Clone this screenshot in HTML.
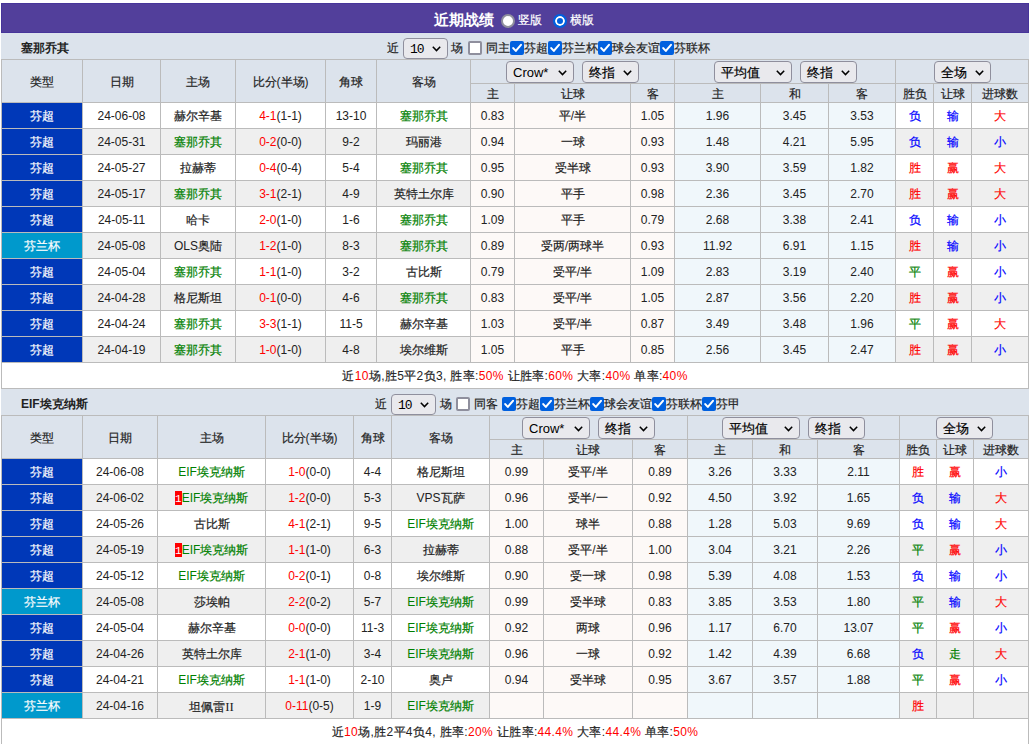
<!DOCTYPE html><html><head><meta charset="utf-8"><style>
html,body{margin:0;padding:0;background:#fff;width:1031px;height:744px;overflow:hidden;position:relative;font-family:"Liberation Sans", sans-serif;}
div{position:absolute;box-sizing:border-box;}
.t{white-space:nowrap;overflow:visible;}
.c{-webkit-text-stroke:0.2px currentColor;}
.sel{background:#e9e9ed;border:1px solid #8f8f9d;border-radius:4px;}
.sel .sl{position:absolute;left:6px;top:-1px;color:#000;white-space:nowrap;}
.chev{position:absolute;}
.cb{width:14px;height:14px;border:2px solid #8f8f9d;border-radius:2px;background:#fff;}
.cb.on{border:none;background:#0060df;}
.cb svg{position:absolute;left:0;top:0;}
.rad{width:14px;height:14px;border-radius:50%;border:2px solid #8f8f9d;background:#fff;}
.rad.on{border:2px solid #0060df;background:#0060df;box-shadow:inset 0 0 0 2px #fff;}
.badge{display:inline-block;background:#f00;color:#fff;width:7px;height:14px;line-height:16px;font-size:11px;text-align:center;vertical-align:-3px;overflow:hidden;font-family:Liberation Mono,monospace;letter-spacing:-0.5px;}
</style></head><body>
<div style="left:1px;top:3px;width:1028px;height:30px;background:#523f9b;border:1px solid #47359a;"></div>
<div class="t" style="left:434px;top:5px;width:62px;height:30px;line-height:30px;color:#fff;font-size:15px;text-align:left;font-weight:bold;--nostroke:1;">近期战绩</div>
<div class="rad" style="left:501px;top:14px;"></div>
<div class="t" style="left:518px;top:5px;width:30px;height:30px;line-height:30px;color:#fff;font-size:12px;text-align:left;"><span class="c">竖版</span></div>
<div class="rad on" style="left:553px;top:14px;"></div>
<div class="t" style="left:570px;top:5px;width:30px;height:30px;line-height:30px;color:#fff;font-size:12px;text-align:left;"><span class="c">横版</span></div>
<div style="left:1px;top:33px;width:1028px;height:26px;background:#dce3ec;"></div>
<div class="t" style="left:21px;top:34px;width:100px;height:26px;line-height:26px;color:#222;font-size:12px;text-align:left;font-weight:bold;--nostroke:1;padding-top:2px;height:24px;line-height:24px;">塞那乔其</div>
<div class="t" style="left:387px;top:34px;width:80px;height:26px;line-height:26px;color:#222;font-size:12px;text-align:left;padding-top:2px;height:24px;line-height:24px;"><span class="c">近</span></div>
<div class="sel" style="left:403px;top:38px;width:45px;height:21px;"><span class="sl" style="font-size:13px;line-height:21px;top:0px;font-family:Liberation Mono,monospace;letter-spacing:-1px;left:6px;-webkit-text-stroke:0;">10</span><svg class="chev" width="9" height="6" viewBox="0 0 9 6" style="right:6px;top:7px"><path d="M0.8 0.8 L4.5 4.6 L8.2 0.8" fill="none" stroke="#000" stroke-width="1.5"/></svg></div>
<div class="t" style="left:451px;top:34px;width:80px;height:26px;line-height:26px;color:#222;font-size:12px;text-align:left;padding-top:2px;height:24px;line-height:24px;"><span class="c">场</span></div>
<div class="cb" style="left:468px;top:41px;"></div>
<div class="t" style="left:486px;top:34px;width:80px;height:26px;line-height:26px;color:#222;font-size:12px;text-align:left;padding-top:2px;height:24px;line-height:24px;"><span class="c">同主</span></div>
<div class="cb on" style="left:510px;top:41px;"><svg width="14" height="14" viewBox="0 0 13 13"><path d="M3 6.6 L5.4 9.2 L10.2 3.6" fill="none" stroke="#fff" stroke-width="1.9" stroke-linecap="round" stroke-linejoin="round"/></svg></div>
<div class="t" style="left:524px;top:34px;width:80px;height:26px;line-height:26px;color:#222;font-size:12px;text-align:left;padding-top:2px;height:24px;line-height:24px;"><span class="c">芬超</span></div>
<div class="cb on" style="left:548px;top:41px;"><svg width="14" height="14" viewBox="0 0 13 13"><path d="M3 6.6 L5.4 9.2 L10.2 3.6" fill="none" stroke="#fff" stroke-width="1.9" stroke-linecap="round" stroke-linejoin="round"/></svg></div>
<div class="t" style="left:562px;top:34px;width:80px;height:26px;line-height:26px;color:#222;font-size:12px;text-align:left;padding-top:2px;height:24px;line-height:24px;"><span class="c">芬兰杯</span></div>
<div class="cb on" style="left:598px;top:41px;"><svg width="14" height="14" viewBox="0 0 13 13"><path d="M3 6.6 L5.4 9.2 L10.2 3.6" fill="none" stroke="#fff" stroke-width="1.9" stroke-linecap="round" stroke-linejoin="round"/></svg></div>
<div class="t" style="left:612px;top:34px;width:80px;height:26px;line-height:26px;color:#222;font-size:12px;text-align:left;padding-top:2px;height:24px;line-height:24px;"><span class="c">球会友谊</span></div>
<div class="cb on" style="left:660px;top:41px;"><svg width="14" height="14" viewBox="0 0 13 13"><path d="M3 6.6 L5.4 9.2 L10.2 3.6" fill="none" stroke="#fff" stroke-width="1.9" stroke-linecap="round" stroke-linejoin="round"/></svg></div>
<div class="t" style="left:674px;top:34px;width:80px;height:26px;line-height:26px;color:#222;font-size:12px;text-align:left;padding-top:2px;height:24px;line-height:24px;"><span class="c">芬联杯</span></div>
<div style="left:1px;top:59px;width:1028px;height:44px;background:#dce3ec;"></div>
<div style="left:1px;top:102px;width:1028px;height:26px;background:#fff;"></div>
<div style="left:2px;top:103px;width:80px;height:25px;background:#0038b8;"></div>
<div style="left:471px;top:103px;width:43px;height:25px;background:#fdf9f7;"></div>
<div style="left:515px;top:103px;width:115px;height:25px;background:#fdf9f7;"></div>
<div style="left:631px;top:103px;width:43px;height:25px;background:#fdf9f7;"></div>
<div style="left:675px;top:103px;width:85px;height:25px;background:#f0f7fb;"></div>
<div style="left:761px;top:103px;width:67px;height:25px;background:#f0f7fb;"></div>
<div style="left:829px;top:103px;width:66px;height:25px;background:#f0f7fb;"></div>
<div style="left:1px;top:128px;width:1028px;height:26px;background:#efefef;"></div>
<div style="left:2px;top:129px;width:80px;height:25px;background:#0038b8;"></div>
<div style="left:471px;top:129px;width:43px;height:25px;background:#fdf9f7;"></div>
<div style="left:515px;top:129px;width:115px;height:25px;background:#fdf9f7;"></div>
<div style="left:631px;top:129px;width:43px;height:25px;background:#fdf9f7;"></div>
<div style="left:675px;top:129px;width:85px;height:25px;background:#f0f7fb;"></div>
<div style="left:761px;top:129px;width:67px;height:25px;background:#f0f7fb;"></div>
<div style="left:829px;top:129px;width:66px;height:25px;background:#f0f7fb;"></div>
<div style="left:1px;top:154px;width:1028px;height:26px;background:#fff;"></div>
<div style="left:2px;top:155px;width:80px;height:25px;background:#0038b8;"></div>
<div style="left:471px;top:155px;width:43px;height:25px;background:#fdf9f7;"></div>
<div style="left:515px;top:155px;width:115px;height:25px;background:#fdf9f7;"></div>
<div style="left:631px;top:155px;width:43px;height:25px;background:#fdf9f7;"></div>
<div style="left:675px;top:155px;width:85px;height:25px;background:#f0f7fb;"></div>
<div style="left:761px;top:155px;width:67px;height:25px;background:#f0f7fb;"></div>
<div style="left:829px;top:155px;width:66px;height:25px;background:#f0f7fb;"></div>
<div style="left:1px;top:180px;width:1028px;height:26px;background:#efefef;"></div>
<div style="left:2px;top:181px;width:80px;height:25px;background:#0038b8;"></div>
<div style="left:471px;top:181px;width:43px;height:25px;background:#fdf9f7;"></div>
<div style="left:515px;top:181px;width:115px;height:25px;background:#fdf9f7;"></div>
<div style="left:631px;top:181px;width:43px;height:25px;background:#fdf9f7;"></div>
<div style="left:675px;top:181px;width:85px;height:25px;background:#f0f7fb;"></div>
<div style="left:761px;top:181px;width:67px;height:25px;background:#f0f7fb;"></div>
<div style="left:829px;top:181px;width:66px;height:25px;background:#f0f7fb;"></div>
<div style="left:1px;top:206px;width:1028px;height:26px;background:#fff;"></div>
<div style="left:2px;top:207px;width:80px;height:25px;background:#0038b8;"></div>
<div style="left:471px;top:207px;width:43px;height:25px;background:#fdf9f7;"></div>
<div style="left:515px;top:207px;width:115px;height:25px;background:#fdf9f7;"></div>
<div style="left:631px;top:207px;width:43px;height:25px;background:#fdf9f7;"></div>
<div style="left:675px;top:207px;width:85px;height:25px;background:#f0f7fb;"></div>
<div style="left:761px;top:207px;width:67px;height:25px;background:#f0f7fb;"></div>
<div style="left:829px;top:207px;width:66px;height:25px;background:#f0f7fb;"></div>
<div style="left:1px;top:232px;width:1028px;height:26px;background:#efefef;"></div>
<div style="left:2px;top:233px;width:80px;height:25px;background:#0099cc;"></div>
<div style="left:471px;top:233px;width:43px;height:25px;background:#fdf9f7;"></div>
<div style="left:515px;top:233px;width:115px;height:25px;background:#fdf9f7;"></div>
<div style="left:631px;top:233px;width:43px;height:25px;background:#fdf9f7;"></div>
<div style="left:675px;top:233px;width:85px;height:25px;background:#f0f7fb;"></div>
<div style="left:761px;top:233px;width:67px;height:25px;background:#f0f7fb;"></div>
<div style="left:829px;top:233px;width:66px;height:25px;background:#f0f7fb;"></div>
<div style="left:1px;top:258px;width:1028px;height:26px;background:#fff;"></div>
<div style="left:2px;top:259px;width:80px;height:25px;background:#0038b8;"></div>
<div style="left:471px;top:259px;width:43px;height:25px;background:#fdf9f7;"></div>
<div style="left:515px;top:259px;width:115px;height:25px;background:#fdf9f7;"></div>
<div style="left:631px;top:259px;width:43px;height:25px;background:#fdf9f7;"></div>
<div style="left:675px;top:259px;width:85px;height:25px;background:#f0f7fb;"></div>
<div style="left:761px;top:259px;width:67px;height:25px;background:#f0f7fb;"></div>
<div style="left:829px;top:259px;width:66px;height:25px;background:#f0f7fb;"></div>
<div style="left:1px;top:284px;width:1028px;height:26px;background:#efefef;"></div>
<div style="left:2px;top:285px;width:80px;height:25px;background:#0038b8;"></div>
<div style="left:471px;top:285px;width:43px;height:25px;background:#fdf9f7;"></div>
<div style="left:515px;top:285px;width:115px;height:25px;background:#fdf9f7;"></div>
<div style="left:631px;top:285px;width:43px;height:25px;background:#fdf9f7;"></div>
<div style="left:675px;top:285px;width:85px;height:25px;background:#f0f7fb;"></div>
<div style="left:761px;top:285px;width:67px;height:25px;background:#f0f7fb;"></div>
<div style="left:829px;top:285px;width:66px;height:25px;background:#f0f7fb;"></div>
<div style="left:1px;top:310px;width:1028px;height:26px;background:#fff;"></div>
<div style="left:2px;top:311px;width:80px;height:25px;background:#0038b8;"></div>
<div style="left:471px;top:311px;width:43px;height:25px;background:#fdf9f7;"></div>
<div style="left:515px;top:311px;width:115px;height:25px;background:#fdf9f7;"></div>
<div style="left:631px;top:311px;width:43px;height:25px;background:#fdf9f7;"></div>
<div style="left:675px;top:311px;width:85px;height:25px;background:#f0f7fb;"></div>
<div style="left:761px;top:311px;width:67px;height:25px;background:#f0f7fb;"></div>
<div style="left:829px;top:311px;width:66px;height:25px;background:#f0f7fb;"></div>
<div style="left:1px;top:336px;width:1028px;height:26px;background:#efefef;"></div>
<div style="left:2px;top:337px;width:80px;height:25px;background:#0038b8;"></div>
<div style="left:471px;top:337px;width:43px;height:25px;background:#fdf9f7;"></div>
<div style="left:515px;top:337px;width:115px;height:25px;background:#fdf9f7;"></div>
<div style="left:631px;top:337px;width:43px;height:25px;background:#fdf9f7;"></div>
<div style="left:675px;top:337px;width:85px;height:25px;background:#f0f7fb;"></div>
<div style="left:761px;top:337px;width:67px;height:25px;background:#f0f7fb;"></div>
<div style="left:829px;top:337px;width:66px;height:25px;background:#f0f7fb;"></div>
<div style="left:1px;top:362px;width:1028px;height:26px;background:#fff;"></div>
<div style="left:1px;top:59px;width:1px;height:330px;background:#bbb;"></div>
<div style="left:82px;top:59px;width:1px;height:304px;background:#bbb;"></div>
<div style="left:160px;top:59px;width:1px;height:304px;background:#bbb;"></div>
<div style="left:235px;top:59px;width:1px;height:304px;background:#bbb;"></div>
<div style="left:325px;top:59px;width:1px;height:304px;background:#bbb;"></div>
<div style="left:376px;top:59px;width:1px;height:304px;background:#bbb;"></div>
<div style="left:470px;top:59px;width:1px;height:304px;background:#bbb;"></div>
<div style="left:514px;top:59px;width:1px;height:304px;background:#bbb;"></div>
<div style="left:630px;top:59px;width:1px;height:304px;background:#bbb;"></div>
<div style="left:674px;top:59px;width:1px;height:304px;background:#bbb;"></div>
<div style="left:760px;top:59px;width:1px;height:304px;background:#bbb;"></div>
<div style="left:828px;top:59px;width:1px;height:304px;background:#bbb;"></div>
<div style="left:895px;top:59px;width:1px;height:304px;background:#bbb;"></div>
<div style="left:933px;top:59px;width:1px;height:304px;background:#bbb;"></div>
<div style="left:971px;top:59px;width:1px;height:304px;background:#bbb;"></div>
<div style="left:1028px;top:59px;width:1px;height:330px;background:#bbb;"></div>
<div style="left:1px;top:59px;width:1028px;height:1px;background:#bbb;"></div>
<div style="left:470px;top:83px;width:558px;height:1px;background:#bbb;"></div>
<div style="left:1px;top:102px;width:1028px;height:1px;background:#bbb;"></div>
<div style="left:1px;top:128px;width:1028px;height:1px;background:#bbb;"></div>
<div style="left:1px;top:154px;width:1028px;height:1px;background:#bbb;"></div>
<div style="left:1px;top:180px;width:1028px;height:1px;background:#bbb;"></div>
<div style="left:1px;top:206px;width:1028px;height:1px;background:#bbb;"></div>
<div style="left:1px;top:232px;width:1028px;height:1px;background:#bbb;"></div>
<div style="left:1px;top:258px;width:1028px;height:1px;background:#bbb;"></div>
<div style="left:1px;top:284px;width:1028px;height:1px;background:#bbb;"></div>
<div style="left:1px;top:310px;width:1028px;height:1px;background:#bbb;"></div>
<div style="left:1px;top:336px;width:1028px;height:1px;background:#bbb;"></div>
<div style="left:1px;top:362px;width:1028px;height:1px;background:#bbb;"></div>
<div style="left:1px;top:388px;width:1028px;height:1px;background:#bbb;"></div>
<div style="left:514px;top:60px;width:1px;height:23px;background:#dce3ec;"></div>
<div style="left:630px;top:60px;width:1px;height:23px;background:#dce3ec;"></div>
<div style="left:760px;top:60px;width:1px;height:23px;background:#dce3ec;"></div>
<div style="left:828px;top:60px;width:1px;height:23px;background:#dce3ec;"></div>
<div style="left:933px;top:60px;width:1px;height:23px;background:#dce3ec;"></div>
<div style="left:971px;top:60px;width:1px;height:23px;background:#dce3ec;"></div>
<div class="t" style="left:2px;top:61px;width:80px;height:42px;line-height:42px;color:#222;font-size:12px;text-align:center;padding-top:1px;height:41px;line-height:41px;"><span class="c">类型</span></div>
<div class="t" style="left:83px;top:61px;width:77px;height:42px;line-height:42px;color:#222;font-size:12px;text-align:center;padding-top:1px;height:41px;line-height:41px;"><span class="c">日期</span></div>
<div class="t" style="left:161px;top:61px;width:74px;height:42px;line-height:42px;color:#222;font-size:12px;text-align:center;padding-top:1px;height:41px;line-height:41px;"><span class="c">主场</span></div>
<div class="t" style="left:236px;top:61px;width:89px;height:42px;line-height:42px;color:#222;font-size:12px;text-align:center;padding-top:1px;height:41px;line-height:41px;"><span class="c">比分</span>(<span class="c">半场</span>)</div>
<div class="t" style="left:326px;top:61px;width:50px;height:42px;line-height:42px;color:#222;font-size:12px;text-align:center;padding-top:1px;height:41px;line-height:41px;"><span class="c">角球</span></div>
<div class="t" style="left:377px;top:61px;width:93px;height:42px;line-height:42px;color:#222;font-size:12px;text-align:center;padding-top:1px;height:41px;line-height:41px;"><span class="c">客场</span></div>
<div class="t" style="left:471px;top:85px;width:43px;height:18px;line-height:18px;color:#222;font-size:12px;text-align:center;padding-top:1px;height:17px;line-height:17px;"><span class="c">主</span></div>
<div class="t" style="left:515px;top:85px;width:115px;height:18px;line-height:18px;color:#222;font-size:12px;text-align:center;padding-top:1px;height:17px;line-height:17px;"><span class="c">让球</span></div>
<div class="t" style="left:631px;top:85px;width:43px;height:18px;line-height:18px;color:#222;font-size:12px;text-align:center;padding-top:1px;height:17px;line-height:17px;"><span class="c">客</span></div>
<div class="t" style="left:675px;top:85px;width:85px;height:18px;line-height:18px;color:#222;font-size:12px;text-align:center;padding-top:1px;height:17px;line-height:17px;"><span class="c">主</span></div>
<div class="t" style="left:761px;top:85px;width:67px;height:18px;line-height:18px;color:#222;font-size:12px;text-align:center;padding-top:1px;height:17px;line-height:17px;"><span class="c">和</span></div>
<div class="t" style="left:829px;top:85px;width:66px;height:18px;line-height:18px;color:#222;font-size:12px;text-align:center;padding-top:1px;height:17px;line-height:17px;"><span class="c">客</span></div>
<div class="t" style="left:896px;top:85px;width:37px;height:18px;line-height:18px;color:#222;font-size:12px;text-align:center;padding-top:1px;height:17px;line-height:17px;"><span class="c">胜负</span></div>
<div class="t" style="left:934px;top:85px;width:37px;height:18px;line-height:18px;color:#222;font-size:12px;text-align:center;padding-top:1px;height:17px;line-height:17px;"><span class="c">让球</span></div>
<div class="t" style="left:972px;top:85px;width:56px;height:18px;line-height:18px;color:#222;font-size:12px;text-align:center;padding-top:1px;height:17px;line-height:17px;"><span class="c">进球数</span></div>
<div class="sel" style="left:506px;top:61px;width:68px;height:22px;"><span class="sl" style="font-size:13px;line-height:22px;top:0px;">Crow*</span><svg class="chev" width="9" height="6" viewBox="0 0 9 6" style="right:6px;top:8px"><path d="M0.8 0.8 L4.5 4.6 L8.2 0.8" fill="none" stroke="#000" stroke-width="1.5"/></svg></div>
<div class="sel" style="left:582px;top:61px;width:57px;height:22px;"><span class="sl" style="font-size:13px;line-height:22px;top:0px;"><span class="c">终指</span></span><svg class="chev" width="9" height="6" viewBox="0 0 9 6" style="right:6px;top:8px"><path d="M0.8 0.8 L4.5 4.6 L8.2 0.8" fill="none" stroke="#000" stroke-width="1.5"/></svg></div>
<div class="sel" style="left:714px;top:61px;width:78px;height:22px;"><span class="sl" style="font-size:13px;line-height:22px;top:0px;"><span class="c">平均值</span></span><svg class="chev" width="9" height="6" viewBox="0 0 9 6" style="right:6px;top:8px"><path d="M0.8 0.8 L4.5 4.6 L8.2 0.8" fill="none" stroke="#000" stroke-width="1.5"/></svg></div>
<div class="sel" style="left:800px;top:61px;width:57px;height:22px;"><span class="sl" style="font-size:13px;line-height:22px;top:0px;"><span class="c">终指</span></span><svg class="chev" width="9" height="6" viewBox="0 0 9 6" style="right:6px;top:8px"><path d="M0.8 0.8 L4.5 4.6 L8.2 0.8" fill="none" stroke="#000" stroke-width="1.5"/></svg></div>
<div class="sel" style="left:934px;top:61px;width:57px;height:22px;"><span class="sl" style="font-size:13px;line-height:22px;top:0px;"><span class="c">全场</span></span><svg class="chev" width="9" height="6" viewBox="0 0 9 6" style="right:6px;top:8px"><path d="M0.8 0.8 L4.5 4.6 L8.2 0.8" fill="none" stroke="#000" stroke-width="1.5"/></svg></div>
<div class="t" style="left:2px;top:104px;width:80px;height:25px;line-height:25px;color:#fff;font-size:12px;text-align:center;"><span class="c">芬超</span></div>
<div class="t" style="left:83px;top:104px;width:77px;height:25px;line-height:25px;color:#222;font-size:12px;text-align:center;">24-06-08</div>
<div class="t" style="left:161px;top:104px;width:74px;height:25px;line-height:25px;color:#222;font-size:12px;text-align:center;"><span class="c">赫尔辛基</span></div>
<div class="t" style="left:236px;top:104px;width:89px;height:25px;line-height:25px;color:#222;font-size:12px;text-align:center;"><span style="color:#f00">4-1</span>(1-1)</div>
<div class="t" style="left:326px;top:104px;width:50px;height:25px;line-height:25px;color:#222;font-size:12px;text-align:center;">13-10</div>
<div class="t" style="left:377px;top:104px;width:93px;height:25px;line-height:25px;color:#008000;font-size:12px;text-align:center;"><span class="c">塞那乔其</span></div>
<div class="t" style="left:471px;top:104px;width:43px;height:25px;line-height:25px;color:#222;font-size:12px;text-align:center;">0.83</div>
<div class="t" style="left:515px;top:104px;width:115px;height:25px;line-height:25px;color:#222;font-size:12px;text-align:center;"><span class="c">平</span>/<span class="c">半</span></div>
<div class="t" style="left:631px;top:104px;width:43px;height:25px;line-height:25px;color:#222;font-size:12px;text-align:center;">1.05</div>
<div class="t" style="left:675px;top:104px;width:85px;height:25px;line-height:25px;color:#222;font-size:12px;text-align:center;">1.96</div>
<div class="t" style="left:761px;top:104px;width:67px;height:25px;line-height:25px;color:#222;font-size:12px;text-align:center;">3.45</div>
<div class="t" style="left:829px;top:104px;width:66px;height:25px;line-height:25px;color:#222;font-size:12px;text-align:center;">3.53</div>
<div class="t" style="left:896px;top:104px;width:37px;height:25px;line-height:25px;color:#00f;font-size:12px;text-align:center;"><span class="c">负</span></div>
<div class="t" style="left:934px;top:104px;width:37px;height:25px;line-height:25px;color:#00f;font-size:12px;text-align:center;"><span class="c">输</span></div>
<div class="t" style="left:972px;top:104px;width:56px;height:25px;line-height:25px;color:#f00;font-size:12px;text-align:center;"><span class="c">大</span></div>
<div class="t" style="left:2px;top:130px;width:80px;height:25px;line-height:25px;color:#fff;font-size:12px;text-align:center;"><span class="c">芬超</span></div>
<div class="t" style="left:83px;top:130px;width:77px;height:25px;line-height:25px;color:#222;font-size:12px;text-align:center;">24-05-31</div>
<div class="t" style="left:161px;top:130px;width:74px;height:25px;line-height:25px;color:#008000;font-size:12px;text-align:center;"><span class="c">塞那乔其</span></div>
<div class="t" style="left:236px;top:130px;width:89px;height:25px;line-height:25px;color:#222;font-size:12px;text-align:center;"><span style="color:#f00">0-2</span>(0-0)</div>
<div class="t" style="left:326px;top:130px;width:50px;height:25px;line-height:25px;color:#222;font-size:12px;text-align:center;">9-2</div>
<div class="t" style="left:377px;top:130px;width:93px;height:25px;line-height:25px;color:#222;font-size:12px;text-align:center;"><span class="c">玛丽港</span></div>
<div class="t" style="left:471px;top:130px;width:43px;height:25px;line-height:25px;color:#222;font-size:12px;text-align:center;">0.94</div>
<div class="t" style="left:515px;top:130px;width:115px;height:25px;line-height:25px;color:#222;font-size:12px;text-align:center;"><span class="c">一球</span></div>
<div class="t" style="left:631px;top:130px;width:43px;height:25px;line-height:25px;color:#222;font-size:12px;text-align:center;">0.93</div>
<div class="t" style="left:675px;top:130px;width:85px;height:25px;line-height:25px;color:#222;font-size:12px;text-align:center;">1.48</div>
<div class="t" style="left:761px;top:130px;width:67px;height:25px;line-height:25px;color:#222;font-size:12px;text-align:center;">4.21</div>
<div class="t" style="left:829px;top:130px;width:66px;height:25px;line-height:25px;color:#222;font-size:12px;text-align:center;">5.95</div>
<div class="t" style="left:896px;top:130px;width:37px;height:25px;line-height:25px;color:#00f;font-size:12px;text-align:center;"><span class="c">负</span></div>
<div class="t" style="left:934px;top:130px;width:37px;height:25px;line-height:25px;color:#00f;font-size:12px;text-align:center;"><span class="c">输</span></div>
<div class="t" style="left:972px;top:130px;width:56px;height:25px;line-height:25px;color:#00f;font-size:12px;text-align:center;"><span class="c">小</span></div>
<div class="t" style="left:2px;top:156px;width:80px;height:25px;line-height:25px;color:#fff;font-size:12px;text-align:center;"><span class="c">芬超</span></div>
<div class="t" style="left:83px;top:156px;width:77px;height:25px;line-height:25px;color:#222;font-size:12px;text-align:center;">24-05-27</div>
<div class="t" style="left:161px;top:156px;width:74px;height:25px;line-height:25px;color:#222;font-size:12px;text-align:center;"><span class="c">拉赫蒂</span></div>
<div class="t" style="left:236px;top:156px;width:89px;height:25px;line-height:25px;color:#222;font-size:12px;text-align:center;"><span style="color:#f00">0-4</span>(0-4)</div>
<div class="t" style="left:326px;top:156px;width:50px;height:25px;line-height:25px;color:#222;font-size:12px;text-align:center;">5-4</div>
<div class="t" style="left:377px;top:156px;width:93px;height:25px;line-height:25px;color:#008000;font-size:12px;text-align:center;"><span class="c">塞那乔其</span></div>
<div class="t" style="left:471px;top:156px;width:43px;height:25px;line-height:25px;color:#222;font-size:12px;text-align:center;">0.95</div>
<div class="t" style="left:515px;top:156px;width:115px;height:25px;line-height:25px;color:#222;font-size:12px;text-align:center;"><span class="c">受半球</span></div>
<div class="t" style="left:631px;top:156px;width:43px;height:25px;line-height:25px;color:#222;font-size:12px;text-align:center;">0.93</div>
<div class="t" style="left:675px;top:156px;width:85px;height:25px;line-height:25px;color:#222;font-size:12px;text-align:center;">3.90</div>
<div class="t" style="left:761px;top:156px;width:67px;height:25px;line-height:25px;color:#222;font-size:12px;text-align:center;">3.59</div>
<div class="t" style="left:829px;top:156px;width:66px;height:25px;line-height:25px;color:#222;font-size:12px;text-align:center;">1.82</div>
<div class="t" style="left:896px;top:156px;width:37px;height:25px;line-height:25px;color:#f00;font-size:12px;text-align:center;"><span class="c">胜</span></div>
<div class="t" style="left:934px;top:156px;width:37px;height:25px;line-height:25px;color:#f00;font-size:12px;text-align:center;"><span class="c">赢</span></div>
<div class="t" style="left:972px;top:156px;width:56px;height:25px;line-height:25px;color:#f00;font-size:12px;text-align:center;"><span class="c">大</span></div>
<div class="t" style="left:2px;top:182px;width:80px;height:25px;line-height:25px;color:#fff;font-size:12px;text-align:center;"><span class="c">芬超</span></div>
<div class="t" style="left:83px;top:182px;width:77px;height:25px;line-height:25px;color:#222;font-size:12px;text-align:center;">24-05-17</div>
<div class="t" style="left:161px;top:182px;width:74px;height:25px;line-height:25px;color:#008000;font-size:12px;text-align:center;"><span class="c">塞那乔其</span></div>
<div class="t" style="left:236px;top:182px;width:89px;height:25px;line-height:25px;color:#222;font-size:12px;text-align:center;"><span style="color:#f00">3-1</span>(2-1)</div>
<div class="t" style="left:326px;top:182px;width:50px;height:25px;line-height:25px;color:#222;font-size:12px;text-align:center;">4-9</div>
<div class="t" style="left:377px;top:182px;width:93px;height:25px;line-height:25px;color:#222;font-size:12px;text-align:center;"><span class="c">英特土尔库</span></div>
<div class="t" style="left:471px;top:182px;width:43px;height:25px;line-height:25px;color:#222;font-size:12px;text-align:center;">0.90</div>
<div class="t" style="left:515px;top:182px;width:115px;height:25px;line-height:25px;color:#222;font-size:12px;text-align:center;"><span class="c">平手</span></div>
<div class="t" style="left:631px;top:182px;width:43px;height:25px;line-height:25px;color:#222;font-size:12px;text-align:center;">0.98</div>
<div class="t" style="left:675px;top:182px;width:85px;height:25px;line-height:25px;color:#222;font-size:12px;text-align:center;">2.36</div>
<div class="t" style="left:761px;top:182px;width:67px;height:25px;line-height:25px;color:#222;font-size:12px;text-align:center;">3.45</div>
<div class="t" style="left:829px;top:182px;width:66px;height:25px;line-height:25px;color:#222;font-size:12px;text-align:center;">2.70</div>
<div class="t" style="left:896px;top:182px;width:37px;height:25px;line-height:25px;color:#f00;font-size:12px;text-align:center;"><span class="c">胜</span></div>
<div class="t" style="left:934px;top:182px;width:37px;height:25px;line-height:25px;color:#f00;font-size:12px;text-align:center;"><span class="c">赢</span></div>
<div class="t" style="left:972px;top:182px;width:56px;height:25px;line-height:25px;color:#f00;font-size:12px;text-align:center;"><span class="c">大</span></div>
<div class="t" style="left:2px;top:208px;width:80px;height:25px;line-height:25px;color:#fff;font-size:12px;text-align:center;"><span class="c">芬超</span></div>
<div class="t" style="left:83px;top:208px;width:77px;height:25px;line-height:25px;color:#222;font-size:12px;text-align:center;">24-05-11</div>
<div class="t" style="left:161px;top:208px;width:74px;height:25px;line-height:25px;color:#222;font-size:12px;text-align:center;"><span class="c">哈卡</span></div>
<div class="t" style="left:236px;top:208px;width:89px;height:25px;line-height:25px;color:#222;font-size:12px;text-align:center;"><span style="color:#f00">2-0</span>(1-0)</div>
<div class="t" style="left:326px;top:208px;width:50px;height:25px;line-height:25px;color:#222;font-size:12px;text-align:center;">1-6</div>
<div class="t" style="left:377px;top:208px;width:93px;height:25px;line-height:25px;color:#008000;font-size:12px;text-align:center;"><span class="c">塞那乔其</span></div>
<div class="t" style="left:471px;top:208px;width:43px;height:25px;line-height:25px;color:#222;font-size:12px;text-align:center;">1.09</div>
<div class="t" style="left:515px;top:208px;width:115px;height:25px;line-height:25px;color:#222;font-size:12px;text-align:center;"><span class="c">平手</span></div>
<div class="t" style="left:631px;top:208px;width:43px;height:25px;line-height:25px;color:#222;font-size:12px;text-align:center;">0.79</div>
<div class="t" style="left:675px;top:208px;width:85px;height:25px;line-height:25px;color:#222;font-size:12px;text-align:center;">2.68</div>
<div class="t" style="left:761px;top:208px;width:67px;height:25px;line-height:25px;color:#222;font-size:12px;text-align:center;">3.38</div>
<div class="t" style="left:829px;top:208px;width:66px;height:25px;line-height:25px;color:#222;font-size:12px;text-align:center;">2.41</div>
<div class="t" style="left:896px;top:208px;width:37px;height:25px;line-height:25px;color:#00f;font-size:12px;text-align:center;"><span class="c">负</span></div>
<div class="t" style="left:934px;top:208px;width:37px;height:25px;line-height:25px;color:#00f;font-size:12px;text-align:center;"><span class="c">输</span></div>
<div class="t" style="left:972px;top:208px;width:56px;height:25px;line-height:25px;color:#00f;font-size:12px;text-align:center;"><span class="c">小</span></div>
<div class="t" style="left:2px;top:234px;width:80px;height:25px;line-height:25px;color:#fff;font-size:12px;text-align:center;"><span class="c">芬兰杯</span></div>
<div class="t" style="left:83px;top:234px;width:77px;height:25px;line-height:25px;color:#222;font-size:12px;text-align:center;">24-05-08</div>
<div class="t" style="left:161px;top:234px;width:74px;height:25px;line-height:25px;color:#222;font-size:12px;text-align:center;">OLS<span class="c">奥陆</span></div>
<div class="t" style="left:236px;top:234px;width:89px;height:25px;line-height:25px;color:#222;font-size:12px;text-align:center;"><span style="color:#f00">1-2</span>(1-0)</div>
<div class="t" style="left:326px;top:234px;width:50px;height:25px;line-height:25px;color:#222;font-size:12px;text-align:center;">8-3</div>
<div class="t" style="left:377px;top:234px;width:93px;height:25px;line-height:25px;color:#008000;font-size:12px;text-align:center;"><span class="c">塞那乔其</span></div>
<div class="t" style="left:471px;top:234px;width:43px;height:25px;line-height:25px;color:#222;font-size:12px;text-align:center;">0.89</div>
<div class="t" style="left:515px;top:234px;width:115px;height:25px;line-height:25px;color:#222;font-size:12px;text-align:center;"><span class="c">受两</span>/<span class="c">两球半</span></div>
<div class="t" style="left:631px;top:234px;width:43px;height:25px;line-height:25px;color:#222;font-size:12px;text-align:center;">0.93</div>
<div class="t" style="left:675px;top:234px;width:85px;height:25px;line-height:25px;color:#222;font-size:12px;text-align:center;">11.92</div>
<div class="t" style="left:761px;top:234px;width:67px;height:25px;line-height:25px;color:#222;font-size:12px;text-align:center;">6.91</div>
<div class="t" style="left:829px;top:234px;width:66px;height:25px;line-height:25px;color:#222;font-size:12px;text-align:center;">1.15</div>
<div class="t" style="left:896px;top:234px;width:37px;height:25px;line-height:25px;color:#f00;font-size:12px;text-align:center;"><span class="c">胜</span></div>
<div class="t" style="left:934px;top:234px;width:37px;height:25px;line-height:25px;color:#00f;font-size:12px;text-align:center;"><span class="c">输</span></div>
<div class="t" style="left:972px;top:234px;width:56px;height:25px;line-height:25px;color:#00f;font-size:12px;text-align:center;"><span class="c">小</span></div>
<div class="t" style="left:2px;top:260px;width:80px;height:25px;line-height:25px;color:#fff;font-size:12px;text-align:center;"><span class="c">芬超</span></div>
<div class="t" style="left:83px;top:260px;width:77px;height:25px;line-height:25px;color:#222;font-size:12px;text-align:center;">24-05-04</div>
<div class="t" style="left:161px;top:260px;width:74px;height:25px;line-height:25px;color:#008000;font-size:12px;text-align:center;"><span class="c">塞那乔其</span></div>
<div class="t" style="left:236px;top:260px;width:89px;height:25px;line-height:25px;color:#222;font-size:12px;text-align:center;"><span style="color:#f00">1-1</span>(1-0)</div>
<div class="t" style="left:326px;top:260px;width:50px;height:25px;line-height:25px;color:#222;font-size:12px;text-align:center;">3-2</div>
<div class="t" style="left:377px;top:260px;width:93px;height:25px;line-height:25px;color:#222;font-size:12px;text-align:center;"><span class="c">古比斯</span></div>
<div class="t" style="left:471px;top:260px;width:43px;height:25px;line-height:25px;color:#222;font-size:12px;text-align:center;">0.79</div>
<div class="t" style="left:515px;top:260px;width:115px;height:25px;line-height:25px;color:#222;font-size:12px;text-align:center;"><span class="c">受平</span>/<span class="c">半</span></div>
<div class="t" style="left:631px;top:260px;width:43px;height:25px;line-height:25px;color:#222;font-size:12px;text-align:center;">1.09</div>
<div class="t" style="left:675px;top:260px;width:85px;height:25px;line-height:25px;color:#222;font-size:12px;text-align:center;">2.83</div>
<div class="t" style="left:761px;top:260px;width:67px;height:25px;line-height:25px;color:#222;font-size:12px;text-align:center;">3.19</div>
<div class="t" style="left:829px;top:260px;width:66px;height:25px;line-height:25px;color:#222;font-size:12px;text-align:center;">2.40</div>
<div class="t" style="left:896px;top:260px;width:37px;height:25px;line-height:25px;color:#008000;font-size:12px;text-align:center;"><span class="c">平</span></div>
<div class="t" style="left:934px;top:260px;width:37px;height:25px;line-height:25px;color:#f00;font-size:12px;text-align:center;"><span class="c">赢</span></div>
<div class="t" style="left:972px;top:260px;width:56px;height:25px;line-height:25px;color:#00f;font-size:12px;text-align:center;"><span class="c">小</span></div>
<div class="t" style="left:2px;top:286px;width:80px;height:25px;line-height:25px;color:#fff;font-size:12px;text-align:center;"><span class="c">芬超</span></div>
<div class="t" style="left:83px;top:286px;width:77px;height:25px;line-height:25px;color:#222;font-size:12px;text-align:center;">24-04-28</div>
<div class="t" style="left:161px;top:286px;width:74px;height:25px;line-height:25px;color:#222;font-size:12px;text-align:center;"><span class="c">格尼斯坦</span></div>
<div class="t" style="left:236px;top:286px;width:89px;height:25px;line-height:25px;color:#222;font-size:12px;text-align:center;"><span style="color:#f00">0-1</span>(0-0)</div>
<div class="t" style="left:326px;top:286px;width:50px;height:25px;line-height:25px;color:#222;font-size:12px;text-align:center;">4-6</div>
<div class="t" style="left:377px;top:286px;width:93px;height:25px;line-height:25px;color:#008000;font-size:12px;text-align:center;"><span class="c">塞那乔其</span></div>
<div class="t" style="left:471px;top:286px;width:43px;height:25px;line-height:25px;color:#222;font-size:12px;text-align:center;">0.83</div>
<div class="t" style="left:515px;top:286px;width:115px;height:25px;line-height:25px;color:#222;font-size:12px;text-align:center;"><span class="c">受平</span>/<span class="c">半</span></div>
<div class="t" style="left:631px;top:286px;width:43px;height:25px;line-height:25px;color:#222;font-size:12px;text-align:center;">1.05</div>
<div class="t" style="left:675px;top:286px;width:85px;height:25px;line-height:25px;color:#222;font-size:12px;text-align:center;">2.87</div>
<div class="t" style="left:761px;top:286px;width:67px;height:25px;line-height:25px;color:#222;font-size:12px;text-align:center;">3.56</div>
<div class="t" style="left:829px;top:286px;width:66px;height:25px;line-height:25px;color:#222;font-size:12px;text-align:center;">2.20</div>
<div class="t" style="left:896px;top:286px;width:37px;height:25px;line-height:25px;color:#f00;font-size:12px;text-align:center;"><span class="c">胜</span></div>
<div class="t" style="left:934px;top:286px;width:37px;height:25px;line-height:25px;color:#f00;font-size:12px;text-align:center;"><span class="c">赢</span></div>
<div class="t" style="left:972px;top:286px;width:56px;height:25px;line-height:25px;color:#00f;font-size:12px;text-align:center;"><span class="c">小</span></div>
<div class="t" style="left:2px;top:312px;width:80px;height:25px;line-height:25px;color:#fff;font-size:12px;text-align:center;"><span class="c">芬超</span></div>
<div class="t" style="left:83px;top:312px;width:77px;height:25px;line-height:25px;color:#222;font-size:12px;text-align:center;">24-04-24</div>
<div class="t" style="left:161px;top:312px;width:74px;height:25px;line-height:25px;color:#008000;font-size:12px;text-align:center;"><span class="c">塞那乔其</span></div>
<div class="t" style="left:236px;top:312px;width:89px;height:25px;line-height:25px;color:#222;font-size:12px;text-align:center;"><span style="color:#f00">3-3</span>(1-1)</div>
<div class="t" style="left:326px;top:312px;width:50px;height:25px;line-height:25px;color:#222;font-size:12px;text-align:center;">11-5</div>
<div class="t" style="left:377px;top:312px;width:93px;height:25px;line-height:25px;color:#222;font-size:12px;text-align:center;"><span class="c">赫尔辛基</span></div>
<div class="t" style="left:471px;top:312px;width:43px;height:25px;line-height:25px;color:#222;font-size:12px;text-align:center;">1.03</div>
<div class="t" style="left:515px;top:312px;width:115px;height:25px;line-height:25px;color:#222;font-size:12px;text-align:center;"><span class="c">受平</span>/<span class="c">半</span></div>
<div class="t" style="left:631px;top:312px;width:43px;height:25px;line-height:25px;color:#222;font-size:12px;text-align:center;">0.87</div>
<div class="t" style="left:675px;top:312px;width:85px;height:25px;line-height:25px;color:#222;font-size:12px;text-align:center;">3.49</div>
<div class="t" style="left:761px;top:312px;width:67px;height:25px;line-height:25px;color:#222;font-size:12px;text-align:center;">3.48</div>
<div class="t" style="left:829px;top:312px;width:66px;height:25px;line-height:25px;color:#222;font-size:12px;text-align:center;">1.96</div>
<div class="t" style="left:896px;top:312px;width:37px;height:25px;line-height:25px;color:#008000;font-size:12px;text-align:center;"><span class="c">平</span></div>
<div class="t" style="left:934px;top:312px;width:37px;height:25px;line-height:25px;color:#f00;font-size:12px;text-align:center;"><span class="c">赢</span></div>
<div class="t" style="left:972px;top:312px;width:56px;height:25px;line-height:25px;color:#f00;font-size:12px;text-align:center;"><span class="c">大</span></div>
<div class="t" style="left:2px;top:338px;width:80px;height:25px;line-height:25px;color:#fff;font-size:12px;text-align:center;"><span class="c">芬超</span></div>
<div class="t" style="left:83px;top:338px;width:77px;height:25px;line-height:25px;color:#222;font-size:12px;text-align:center;">24-04-19</div>
<div class="t" style="left:161px;top:338px;width:74px;height:25px;line-height:25px;color:#008000;font-size:12px;text-align:center;"><span class="c">塞那乔其</span></div>
<div class="t" style="left:236px;top:338px;width:89px;height:25px;line-height:25px;color:#222;font-size:12px;text-align:center;"><span style="color:#f00">1-0</span>(1-0)</div>
<div class="t" style="left:326px;top:338px;width:50px;height:25px;line-height:25px;color:#222;font-size:12px;text-align:center;">4-8</div>
<div class="t" style="left:377px;top:338px;width:93px;height:25px;line-height:25px;color:#222;font-size:12px;text-align:center;"><span class="c">埃尔维斯</span></div>
<div class="t" style="left:471px;top:338px;width:43px;height:25px;line-height:25px;color:#222;font-size:12px;text-align:center;">1.05</div>
<div class="t" style="left:515px;top:338px;width:115px;height:25px;line-height:25px;color:#222;font-size:12px;text-align:center;"><span class="c">平手</span></div>
<div class="t" style="left:631px;top:338px;width:43px;height:25px;line-height:25px;color:#222;font-size:12px;text-align:center;">0.85</div>
<div class="t" style="left:675px;top:338px;width:85px;height:25px;line-height:25px;color:#222;font-size:12px;text-align:center;">2.56</div>
<div class="t" style="left:761px;top:338px;width:67px;height:25px;line-height:25px;color:#222;font-size:12px;text-align:center;">3.45</div>
<div class="t" style="left:829px;top:338px;width:66px;height:25px;line-height:25px;color:#222;font-size:12px;text-align:center;">2.47</div>
<div class="t" style="left:896px;top:338px;width:37px;height:25px;line-height:25px;color:#f00;font-size:12px;text-align:center;"><span class="c">胜</span></div>
<div class="t" style="left:934px;top:338px;width:37px;height:25px;line-height:25px;color:#f00;font-size:12px;text-align:center;"><span class="c">赢</span></div>
<div class="t" style="left:972px;top:338px;width:56px;height:25px;line-height:25px;color:#00f;font-size:12px;text-align:center;"><span class="c">小</span></div>
<div class="t" style="left:2px;top:364px;width:1026px;height:25px;line-height:25px;color:#222;font-size:12px;text-align:center;letter-spacing:0.35px;"><span class="c">近</span><span style="color:#f00">10</span><span class="c">场</span>,<span class="c">胜</span>5<span class="c">平</span>2<span class="c">负</span>3, <span class="c">胜率</span>:<span style="color:#f00">50%</span> <span class="c">让胜率</span>:<span style="color:#f00">60%</span> <span class="c">大率</span>:<span style="color:#f00">40%</span> <span class="c">单率</span>:<span style="color:#f00">40%</span></div>
<div style="left:1px;top:389px;width:1028px;height:26px;background:#dce3ec;"></div>
<div class="t" style="left:21px;top:390px;width:100px;height:26px;line-height:26px;color:#222;font-size:12px;text-align:left;font-weight:bold;--nostroke:1;padding-top:2px;height:24px;line-height:24px;">EIF埃克纳斯</div>
<div class="t" style="left:375px;top:390px;width:80px;height:26px;line-height:26px;color:#222;font-size:12px;text-align:left;padding-top:2px;height:24px;line-height:24px;"><span class="c">近</span></div>
<div class="sel" style="left:391px;top:394px;width:45px;height:21px;"><span class="sl" style="font-size:13px;line-height:21px;top:0px;font-family:Liberation Mono,monospace;letter-spacing:-1px;left:6px;-webkit-text-stroke:0;">10</span><svg class="chev" width="9" height="6" viewBox="0 0 9 6" style="right:6px;top:7px"><path d="M0.8 0.8 L4.5 4.6 L8.2 0.8" fill="none" stroke="#000" stroke-width="1.5"/></svg></div>
<div class="t" style="left:440px;top:390px;width:80px;height:26px;line-height:26px;color:#222;font-size:12px;text-align:left;padding-top:2px;height:24px;line-height:24px;"><span class="c">场</span></div>
<div class="cb" style="left:456px;top:397px;"></div>
<div class="t" style="left:474px;top:390px;width:80px;height:26px;line-height:26px;color:#222;font-size:12px;text-align:left;padding-top:2px;height:24px;line-height:24px;"><span class="c">同客</span></div>
<div class="cb on" style="left:502px;top:397px;"><svg width="14" height="14" viewBox="0 0 13 13"><path d="M3 6.6 L5.4 9.2 L10.2 3.6" fill="none" stroke="#fff" stroke-width="1.9" stroke-linecap="round" stroke-linejoin="round"/></svg></div>
<div class="t" style="left:516px;top:390px;width:80px;height:26px;line-height:26px;color:#222;font-size:12px;text-align:left;padding-top:2px;height:24px;line-height:24px;"><span class="c">芬超</span></div>
<div class="cb on" style="left:540px;top:397px;"><svg width="14" height="14" viewBox="0 0 13 13"><path d="M3 6.6 L5.4 9.2 L10.2 3.6" fill="none" stroke="#fff" stroke-width="1.9" stroke-linecap="round" stroke-linejoin="round"/></svg></div>
<div class="t" style="left:554px;top:390px;width:80px;height:26px;line-height:26px;color:#222;font-size:12px;text-align:left;padding-top:2px;height:24px;line-height:24px;"><span class="c">芬兰杯</span></div>
<div class="cb on" style="left:590px;top:397px;"><svg width="14" height="14" viewBox="0 0 13 13"><path d="M3 6.6 L5.4 9.2 L10.2 3.6" fill="none" stroke="#fff" stroke-width="1.9" stroke-linecap="round" stroke-linejoin="round"/></svg></div>
<div class="t" style="left:604px;top:390px;width:80px;height:26px;line-height:26px;color:#222;font-size:12px;text-align:left;padding-top:2px;height:24px;line-height:24px;"><span class="c">球会友谊</span></div>
<div class="cb on" style="left:652px;top:397px;"><svg width="14" height="14" viewBox="0 0 13 13"><path d="M3 6.6 L5.4 9.2 L10.2 3.6" fill="none" stroke="#fff" stroke-width="1.9" stroke-linecap="round" stroke-linejoin="round"/></svg></div>
<div class="t" style="left:666px;top:390px;width:80px;height:26px;line-height:26px;color:#222;font-size:12px;text-align:left;padding-top:2px;height:24px;line-height:24px;"><span class="c">芬联杯</span></div>
<div class="cb on" style="left:702px;top:397px;"><svg width="14" height="14" viewBox="0 0 13 13"><path d="M3 6.6 L5.4 9.2 L10.2 3.6" fill="none" stroke="#fff" stroke-width="1.9" stroke-linecap="round" stroke-linejoin="round"/></svg></div>
<div class="t" style="left:716px;top:390px;width:80px;height:26px;line-height:26px;color:#222;font-size:12px;text-align:left;padding-top:2px;height:24px;line-height:24px;"><span class="c">芬甲</span></div>
<div style="left:1px;top:415px;width:1028px;height:44px;background:#dce3ec;"></div>
<div style="left:1px;top:458px;width:1028px;height:26px;background:#fff;"></div>
<div style="left:2px;top:459px;width:80px;height:25px;background:#0038b8;"></div>
<div style="left:490px;top:459px;width:53px;height:25px;background:#fdf9f7;"></div>
<div style="left:544px;top:459px;width:88px;height:25px;background:#fdf9f7;"></div>
<div style="left:633px;top:459px;width:54px;height:25px;background:#fdf9f7;"></div>
<div style="left:688px;top:459px;width:64px;height:25px;background:#f0f7fb;"></div>
<div style="left:753px;top:459px;width:64px;height:25px;background:#f0f7fb;"></div>
<div style="left:818px;top:459px;width:81px;height:25px;background:#f0f7fb;"></div>
<div style="left:1px;top:484px;width:1028px;height:26px;background:#efefef;"></div>
<div style="left:2px;top:485px;width:80px;height:25px;background:#0038b8;"></div>
<div style="left:490px;top:485px;width:53px;height:25px;background:#fdf9f7;"></div>
<div style="left:544px;top:485px;width:88px;height:25px;background:#fdf9f7;"></div>
<div style="left:633px;top:485px;width:54px;height:25px;background:#fdf9f7;"></div>
<div style="left:688px;top:485px;width:64px;height:25px;background:#f0f7fb;"></div>
<div style="left:753px;top:485px;width:64px;height:25px;background:#f0f7fb;"></div>
<div style="left:818px;top:485px;width:81px;height:25px;background:#f0f7fb;"></div>
<div style="left:1px;top:510px;width:1028px;height:26px;background:#fff;"></div>
<div style="left:2px;top:511px;width:80px;height:25px;background:#0038b8;"></div>
<div style="left:490px;top:511px;width:53px;height:25px;background:#fdf9f7;"></div>
<div style="left:544px;top:511px;width:88px;height:25px;background:#fdf9f7;"></div>
<div style="left:633px;top:511px;width:54px;height:25px;background:#fdf9f7;"></div>
<div style="left:688px;top:511px;width:64px;height:25px;background:#f0f7fb;"></div>
<div style="left:753px;top:511px;width:64px;height:25px;background:#f0f7fb;"></div>
<div style="left:818px;top:511px;width:81px;height:25px;background:#f0f7fb;"></div>
<div style="left:1px;top:536px;width:1028px;height:26px;background:#efefef;"></div>
<div style="left:2px;top:537px;width:80px;height:25px;background:#0038b8;"></div>
<div style="left:490px;top:537px;width:53px;height:25px;background:#fdf9f7;"></div>
<div style="left:544px;top:537px;width:88px;height:25px;background:#fdf9f7;"></div>
<div style="left:633px;top:537px;width:54px;height:25px;background:#fdf9f7;"></div>
<div style="left:688px;top:537px;width:64px;height:25px;background:#f0f7fb;"></div>
<div style="left:753px;top:537px;width:64px;height:25px;background:#f0f7fb;"></div>
<div style="left:818px;top:537px;width:81px;height:25px;background:#f0f7fb;"></div>
<div style="left:1px;top:562px;width:1028px;height:26px;background:#fff;"></div>
<div style="left:2px;top:563px;width:80px;height:25px;background:#0038b8;"></div>
<div style="left:490px;top:563px;width:53px;height:25px;background:#fdf9f7;"></div>
<div style="left:544px;top:563px;width:88px;height:25px;background:#fdf9f7;"></div>
<div style="left:633px;top:563px;width:54px;height:25px;background:#fdf9f7;"></div>
<div style="left:688px;top:563px;width:64px;height:25px;background:#f0f7fb;"></div>
<div style="left:753px;top:563px;width:64px;height:25px;background:#f0f7fb;"></div>
<div style="left:818px;top:563px;width:81px;height:25px;background:#f0f7fb;"></div>
<div style="left:1px;top:588px;width:1028px;height:26px;background:#efefef;"></div>
<div style="left:2px;top:589px;width:80px;height:25px;background:#0099cc;"></div>
<div style="left:490px;top:589px;width:53px;height:25px;background:#fdf9f7;"></div>
<div style="left:544px;top:589px;width:88px;height:25px;background:#fdf9f7;"></div>
<div style="left:633px;top:589px;width:54px;height:25px;background:#fdf9f7;"></div>
<div style="left:688px;top:589px;width:64px;height:25px;background:#f0f7fb;"></div>
<div style="left:753px;top:589px;width:64px;height:25px;background:#f0f7fb;"></div>
<div style="left:818px;top:589px;width:81px;height:25px;background:#f0f7fb;"></div>
<div style="left:1px;top:614px;width:1028px;height:26px;background:#fff;"></div>
<div style="left:2px;top:615px;width:80px;height:25px;background:#0038b8;"></div>
<div style="left:490px;top:615px;width:53px;height:25px;background:#fdf9f7;"></div>
<div style="left:544px;top:615px;width:88px;height:25px;background:#fdf9f7;"></div>
<div style="left:633px;top:615px;width:54px;height:25px;background:#fdf9f7;"></div>
<div style="left:688px;top:615px;width:64px;height:25px;background:#f0f7fb;"></div>
<div style="left:753px;top:615px;width:64px;height:25px;background:#f0f7fb;"></div>
<div style="left:818px;top:615px;width:81px;height:25px;background:#f0f7fb;"></div>
<div style="left:1px;top:640px;width:1028px;height:26px;background:#efefef;"></div>
<div style="left:2px;top:641px;width:80px;height:25px;background:#0038b8;"></div>
<div style="left:490px;top:641px;width:53px;height:25px;background:#fdf9f7;"></div>
<div style="left:544px;top:641px;width:88px;height:25px;background:#fdf9f7;"></div>
<div style="left:633px;top:641px;width:54px;height:25px;background:#fdf9f7;"></div>
<div style="left:688px;top:641px;width:64px;height:25px;background:#f0f7fb;"></div>
<div style="left:753px;top:641px;width:64px;height:25px;background:#f0f7fb;"></div>
<div style="left:818px;top:641px;width:81px;height:25px;background:#f0f7fb;"></div>
<div style="left:1px;top:666px;width:1028px;height:26px;background:#fff;"></div>
<div style="left:2px;top:667px;width:80px;height:25px;background:#0038b8;"></div>
<div style="left:490px;top:667px;width:53px;height:25px;background:#fdf9f7;"></div>
<div style="left:544px;top:667px;width:88px;height:25px;background:#fdf9f7;"></div>
<div style="left:633px;top:667px;width:54px;height:25px;background:#fdf9f7;"></div>
<div style="left:688px;top:667px;width:64px;height:25px;background:#f0f7fb;"></div>
<div style="left:753px;top:667px;width:64px;height:25px;background:#f0f7fb;"></div>
<div style="left:818px;top:667px;width:81px;height:25px;background:#f0f7fb;"></div>
<div style="left:1px;top:692px;width:1028px;height:26px;background:#efefef;"></div>
<div style="left:2px;top:693px;width:80px;height:25px;background:#0099cc;"></div>
<div style="left:490px;top:693px;width:53px;height:25px;background:#fdf9f7;"></div>
<div style="left:544px;top:693px;width:88px;height:25px;background:#fdf9f7;"></div>
<div style="left:633px;top:693px;width:54px;height:25px;background:#fdf9f7;"></div>
<div style="left:688px;top:693px;width:64px;height:25px;background:#f0f7fb;"></div>
<div style="left:753px;top:693px;width:64px;height:25px;background:#f0f7fb;"></div>
<div style="left:818px;top:693px;width:81px;height:25px;background:#f0f7fb;"></div>
<div style="left:1px;top:718px;width:1028px;height:26px;background:#fff;"></div>
<div style="left:1px;top:415px;width:1px;height:330px;background:#bbb;"></div>
<div style="left:82px;top:415px;width:1px;height:304px;background:#bbb;"></div>
<div style="left:157px;top:415px;width:1px;height:304px;background:#bbb;"></div>
<div style="left:265px;top:415px;width:1px;height:304px;background:#bbb;"></div>
<div style="left:353px;top:415px;width:1px;height:304px;background:#bbb;"></div>
<div style="left:391px;top:415px;width:1px;height:304px;background:#bbb;"></div>
<div style="left:489px;top:415px;width:1px;height:304px;background:#bbb;"></div>
<div style="left:543px;top:415px;width:1px;height:304px;background:#bbb;"></div>
<div style="left:632px;top:415px;width:1px;height:304px;background:#bbb;"></div>
<div style="left:687px;top:415px;width:1px;height:304px;background:#bbb;"></div>
<div style="left:752px;top:415px;width:1px;height:304px;background:#bbb;"></div>
<div style="left:817px;top:415px;width:1px;height:304px;background:#bbb;"></div>
<div style="left:899px;top:415px;width:1px;height:304px;background:#bbb;"></div>
<div style="left:936px;top:415px;width:1px;height:304px;background:#bbb;"></div>
<div style="left:973px;top:415px;width:1px;height:304px;background:#bbb;"></div>
<div style="left:1028px;top:415px;width:1px;height:330px;background:#bbb;"></div>
<div style="left:1px;top:415px;width:1028px;height:1px;background:#bbb;"></div>
<div style="left:489px;top:439px;width:539px;height:1px;background:#bbb;"></div>
<div style="left:1px;top:458px;width:1028px;height:1px;background:#bbb;"></div>
<div style="left:1px;top:484px;width:1028px;height:1px;background:#bbb;"></div>
<div style="left:1px;top:510px;width:1028px;height:1px;background:#bbb;"></div>
<div style="left:1px;top:536px;width:1028px;height:1px;background:#bbb;"></div>
<div style="left:1px;top:562px;width:1028px;height:1px;background:#bbb;"></div>
<div style="left:1px;top:588px;width:1028px;height:1px;background:#bbb;"></div>
<div style="left:1px;top:614px;width:1028px;height:1px;background:#bbb;"></div>
<div style="left:1px;top:640px;width:1028px;height:1px;background:#bbb;"></div>
<div style="left:1px;top:666px;width:1028px;height:1px;background:#bbb;"></div>
<div style="left:1px;top:692px;width:1028px;height:1px;background:#bbb;"></div>
<div style="left:1px;top:718px;width:1028px;height:1px;background:#bbb;"></div>
<div style="left:1px;top:744px;width:1028px;height:1px;background:#bbb;"></div>
<div style="left:543px;top:416px;width:1px;height:23px;background:#dce3ec;"></div>
<div style="left:632px;top:416px;width:1px;height:23px;background:#dce3ec;"></div>
<div style="left:752px;top:416px;width:1px;height:23px;background:#dce3ec;"></div>
<div style="left:817px;top:416px;width:1px;height:23px;background:#dce3ec;"></div>
<div style="left:936px;top:416px;width:1px;height:23px;background:#dce3ec;"></div>
<div style="left:973px;top:416px;width:1px;height:23px;background:#dce3ec;"></div>
<div class="t" style="left:2px;top:417px;width:80px;height:42px;line-height:42px;color:#222;font-size:12px;text-align:center;padding-top:1px;height:41px;line-height:41px;"><span class="c">类型</span></div>
<div class="t" style="left:83px;top:417px;width:74px;height:42px;line-height:42px;color:#222;font-size:12px;text-align:center;padding-top:1px;height:41px;line-height:41px;"><span class="c">日期</span></div>
<div class="t" style="left:158px;top:417px;width:107px;height:42px;line-height:42px;color:#222;font-size:12px;text-align:center;padding-top:1px;height:41px;line-height:41px;"><span class="c">主场</span></div>
<div class="t" style="left:266px;top:417px;width:87px;height:42px;line-height:42px;color:#222;font-size:12px;text-align:center;padding-top:1px;height:41px;line-height:41px;"><span class="c">比分</span>(<span class="c">半场</span>)</div>
<div class="t" style="left:354px;top:417px;width:37px;height:42px;line-height:42px;color:#222;font-size:12px;text-align:center;padding-top:1px;height:41px;line-height:41px;"><span class="c">角球</span></div>
<div class="t" style="left:392px;top:417px;width:97px;height:42px;line-height:42px;color:#222;font-size:12px;text-align:center;padding-top:1px;height:41px;line-height:41px;"><span class="c">客场</span></div>
<div class="t" style="left:490px;top:441px;width:53px;height:18px;line-height:18px;color:#222;font-size:12px;text-align:center;padding-top:1px;height:17px;line-height:17px;"><span class="c">主</span></div>
<div class="t" style="left:544px;top:441px;width:88px;height:18px;line-height:18px;color:#222;font-size:12px;text-align:center;padding-top:1px;height:17px;line-height:17px;"><span class="c">让球</span></div>
<div class="t" style="left:633px;top:441px;width:54px;height:18px;line-height:18px;color:#222;font-size:12px;text-align:center;padding-top:1px;height:17px;line-height:17px;"><span class="c">客</span></div>
<div class="t" style="left:688px;top:441px;width:64px;height:18px;line-height:18px;color:#222;font-size:12px;text-align:center;padding-top:1px;height:17px;line-height:17px;"><span class="c">主</span></div>
<div class="t" style="left:753px;top:441px;width:64px;height:18px;line-height:18px;color:#222;font-size:12px;text-align:center;padding-top:1px;height:17px;line-height:17px;"><span class="c">和</span></div>
<div class="t" style="left:818px;top:441px;width:81px;height:18px;line-height:18px;color:#222;font-size:12px;text-align:center;padding-top:1px;height:17px;line-height:17px;"><span class="c">客</span></div>
<div class="t" style="left:900px;top:441px;width:36px;height:18px;line-height:18px;color:#222;font-size:12px;text-align:center;padding-top:1px;height:17px;line-height:17px;"><span class="c">胜负</span></div>
<div class="t" style="left:937px;top:441px;width:36px;height:18px;line-height:18px;color:#222;font-size:12px;text-align:center;padding-top:1px;height:17px;line-height:17px;"><span class="c">让球</span></div>
<div class="t" style="left:974px;top:441px;width:54px;height:18px;line-height:18px;color:#222;font-size:12px;text-align:center;padding-top:1px;height:17px;line-height:17px;"><span class="c">进球数</span></div>
<div class="sel" style="left:522px;top:417px;width:68px;height:22px;"><span class="sl" style="font-size:13px;line-height:22px;top:0px;">Crow*</span><svg class="chev" width="9" height="6" viewBox="0 0 9 6" style="right:6px;top:8px"><path d="M0.8 0.8 L4.5 4.6 L8.2 0.8" fill="none" stroke="#000" stroke-width="1.5"/></svg></div>
<div class="sel" style="left:598px;top:417px;width:57px;height:22px;"><span class="sl" style="font-size:13px;line-height:22px;top:0px;"><span class="c">终指</span></span><svg class="chev" width="9" height="6" viewBox="0 0 9 6" style="right:6px;top:8px"><path d="M0.8 0.8 L4.5 4.6 L8.2 0.8" fill="none" stroke="#000" stroke-width="1.5"/></svg></div>
<div class="sel" style="left:722px;top:417px;width:78px;height:22px;"><span class="sl" style="font-size:13px;line-height:22px;top:0px;"><span class="c">平均值</span></span><svg class="chev" width="9" height="6" viewBox="0 0 9 6" style="right:6px;top:8px"><path d="M0.8 0.8 L4.5 4.6 L8.2 0.8" fill="none" stroke="#000" stroke-width="1.5"/></svg></div>
<div class="sel" style="left:808px;top:417px;width:57px;height:22px;"><span class="sl" style="font-size:13px;line-height:22px;top:0px;"><span class="c">终指</span></span><svg class="chev" width="9" height="6" viewBox="0 0 9 6" style="right:6px;top:8px"><path d="M0.8 0.8 L4.5 4.6 L8.2 0.8" fill="none" stroke="#000" stroke-width="1.5"/></svg></div>
<div class="sel" style="left:936px;top:417px;width:57px;height:22px;"><span class="sl" style="font-size:13px;line-height:22px;top:0px;"><span class="c">全场</span></span><svg class="chev" width="9" height="6" viewBox="0 0 9 6" style="right:6px;top:8px"><path d="M0.8 0.8 L4.5 4.6 L8.2 0.8" fill="none" stroke="#000" stroke-width="1.5"/></svg></div>
<div class="t" style="left:2px;top:460px;width:80px;height:25px;line-height:25px;color:#fff;font-size:12px;text-align:center;"><span class="c">芬超</span></div>
<div class="t" style="left:83px;top:460px;width:74px;height:25px;line-height:25px;color:#222;font-size:12px;text-align:center;">24-06-08</div>
<div class="t" style="left:158px;top:460px;width:107px;height:25px;line-height:25px;color:#008000;font-size:12px;text-align:center;">EIF<span class="c">埃克纳斯</span></div>
<div class="t" style="left:266px;top:460px;width:87px;height:25px;line-height:25px;color:#222;font-size:12px;text-align:center;"><span style="color:#f00">1-0</span>(0-0)</div>
<div class="t" style="left:354px;top:460px;width:37px;height:25px;line-height:25px;color:#222;font-size:12px;text-align:center;">4-4</div>
<div class="t" style="left:392px;top:460px;width:97px;height:25px;line-height:25px;color:#222;font-size:12px;text-align:center;"><span class="c">格尼斯坦</span></div>
<div class="t" style="left:490px;top:460px;width:53px;height:25px;line-height:25px;color:#222;font-size:12px;text-align:center;">0.99</div>
<div class="t" style="left:544px;top:460px;width:88px;height:25px;line-height:25px;color:#222;font-size:12px;text-align:center;"><span class="c">受平</span>/<span class="c">半</span></div>
<div class="t" style="left:633px;top:460px;width:54px;height:25px;line-height:25px;color:#222;font-size:12px;text-align:center;">0.89</div>
<div class="t" style="left:688px;top:460px;width:64px;height:25px;line-height:25px;color:#222;font-size:12px;text-align:center;">3.26</div>
<div class="t" style="left:753px;top:460px;width:64px;height:25px;line-height:25px;color:#222;font-size:12px;text-align:center;">3.33</div>
<div class="t" style="left:818px;top:460px;width:81px;height:25px;line-height:25px;color:#222;font-size:12px;text-align:center;">2.11</div>
<div class="t" style="left:900px;top:460px;width:36px;height:25px;line-height:25px;color:#f00;font-size:12px;text-align:center;"><span class="c">胜</span></div>
<div class="t" style="left:937px;top:460px;width:36px;height:25px;line-height:25px;color:#f00;font-size:12px;text-align:center;"><span class="c">赢</span></div>
<div class="t" style="left:974px;top:460px;width:54px;height:25px;line-height:25px;color:#00f;font-size:12px;text-align:center;"><span class="c">小</span></div>
<div class="t" style="left:2px;top:486px;width:80px;height:25px;line-height:25px;color:#fff;font-size:12px;text-align:center;"><span class="c">芬超</span></div>
<div class="t" style="left:83px;top:486px;width:74px;height:25px;line-height:25px;color:#222;font-size:12px;text-align:center;">24-06-02</div>
<div class="t" style="left:158px;top:486px;width:107px;height:25px;line-height:25px;color:#008000;font-size:12px;text-align:center;"><span class="badge">1</span>EIF<span class="c">埃克纳斯</span></div>
<div class="t" style="left:266px;top:486px;width:87px;height:25px;line-height:25px;color:#222;font-size:12px;text-align:center;"><span style="color:#f00">1-2</span>(0-0)</div>
<div class="t" style="left:354px;top:486px;width:37px;height:25px;line-height:25px;color:#222;font-size:12px;text-align:center;">5-3</div>
<div class="t" style="left:392px;top:486px;width:97px;height:25px;line-height:25px;color:#222;font-size:12px;text-align:center;">VPS<span class="c">瓦萨</span></div>
<div class="t" style="left:490px;top:486px;width:53px;height:25px;line-height:25px;color:#222;font-size:12px;text-align:center;">0.96</div>
<div class="t" style="left:544px;top:486px;width:88px;height:25px;line-height:25px;color:#222;font-size:12px;text-align:center;"><span class="c">受半</span>/<span class="c">一</span></div>
<div class="t" style="left:633px;top:486px;width:54px;height:25px;line-height:25px;color:#222;font-size:12px;text-align:center;">0.92</div>
<div class="t" style="left:688px;top:486px;width:64px;height:25px;line-height:25px;color:#222;font-size:12px;text-align:center;">4.50</div>
<div class="t" style="left:753px;top:486px;width:64px;height:25px;line-height:25px;color:#222;font-size:12px;text-align:center;">3.92</div>
<div class="t" style="left:818px;top:486px;width:81px;height:25px;line-height:25px;color:#222;font-size:12px;text-align:center;">1.65</div>
<div class="t" style="left:900px;top:486px;width:36px;height:25px;line-height:25px;color:#00f;font-size:12px;text-align:center;"><span class="c">负</span></div>
<div class="t" style="left:937px;top:486px;width:36px;height:25px;line-height:25px;color:#00f;font-size:12px;text-align:center;"><span class="c">输</span></div>
<div class="t" style="left:974px;top:486px;width:54px;height:25px;line-height:25px;color:#f00;font-size:12px;text-align:center;"><span class="c">大</span></div>
<div class="t" style="left:2px;top:512px;width:80px;height:25px;line-height:25px;color:#fff;font-size:12px;text-align:center;"><span class="c">芬超</span></div>
<div class="t" style="left:83px;top:512px;width:74px;height:25px;line-height:25px;color:#222;font-size:12px;text-align:center;">24-05-26</div>
<div class="t" style="left:158px;top:512px;width:107px;height:25px;line-height:25px;color:#222;font-size:12px;text-align:center;"><span class="c">古比斯</span></div>
<div class="t" style="left:266px;top:512px;width:87px;height:25px;line-height:25px;color:#222;font-size:12px;text-align:center;"><span style="color:#f00">4-1</span>(2-1)</div>
<div class="t" style="left:354px;top:512px;width:37px;height:25px;line-height:25px;color:#222;font-size:12px;text-align:center;">9-5</div>
<div class="t" style="left:392px;top:512px;width:97px;height:25px;line-height:25px;color:#008000;font-size:12px;text-align:center;">EIF<span class="c">埃克纳斯</span></div>
<div class="t" style="left:490px;top:512px;width:53px;height:25px;line-height:25px;color:#222;font-size:12px;text-align:center;">1.00</div>
<div class="t" style="left:544px;top:512px;width:88px;height:25px;line-height:25px;color:#222;font-size:12px;text-align:center;"><span class="c">球半</span></div>
<div class="t" style="left:633px;top:512px;width:54px;height:25px;line-height:25px;color:#222;font-size:12px;text-align:center;">0.88</div>
<div class="t" style="left:688px;top:512px;width:64px;height:25px;line-height:25px;color:#222;font-size:12px;text-align:center;">1.28</div>
<div class="t" style="left:753px;top:512px;width:64px;height:25px;line-height:25px;color:#222;font-size:12px;text-align:center;">5.03</div>
<div class="t" style="left:818px;top:512px;width:81px;height:25px;line-height:25px;color:#222;font-size:12px;text-align:center;">9.69</div>
<div class="t" style="left:900px;top:512px;width:36px;height:25px;line-height:25px;color:#00f;font-size:12px;text-align:center;"><span class="c">负</span></div>
<div class="t" style="left:937px;top:512px;width:36px;height:25px;line-height:25px;color:#00f;font-size:12px;text-align:center;"><span class="c">输</span></div>
<div class="t" style="left:974px;top:512px;width:54px;height:25px;line-height:25px;color:#f00;font-size:12px;text-align:center;"><span class="c">大</span></div>
<div class="t" style="left:2px;top:538px;width:80px;height:25px;line-height:25px;color:#fff;font-size:12px;text-align:center;"><span class="c">芬超</span></div>
<div class="t" style="left:83px;top:538px;width:74px;height:25px;line-height:25px;color:#222;font-size:12px;text-align:center;">24-05-19</div>
<div class="t" style="left:158px;top:538px;width:107px;height:25px;line-height:25px;color:#008000;font-size:12px;text-align:center;"><span class="badge">1</span>EIF<span class="c">埃克纳斯</span></div>
<div class="t" style="left:266px;top:538px;width:87px;height:25px;line-height:25px;color:#222;font-size:12px;text-align:center;"><span style="color:#f00">1-1</span>(1-0)</div>
<div class="t" style="left:354px;top:538px;width:37px;height:25px;line-height:25px;color:#222;font-size:12px;text-align:center;">6-3</div>
<div class="t" style="left:392px;top:538px;width:97px;height:25px;line-height:25px;color:#222;font-size:12px;text-align:center;"><span class="c">拉赫蒂</span></div>
<div class="t" style="left:490px;top:538px;width:53px;height:25px;line-height:25px;color:#222;font-size:12px;text-align:center;">0.88</div>
<div class="t" style="left:544px;top:538px;width:88px;height:25px;line-height:25px;color:#222;font-size:12px;text-align:center;"><span class="c">受平</span>/<span class="c">半</span></div>
<div class="t" style="left:633px;top:538px;width:54px;height:25px;line-height:25px;color:#222;font-size:12px;text-align:center;">1.00</div>
<div class="t" style="left:688px;top:538px;width:64px;height:25px;line-height:25px;color:#222;font-size:12px;text-align:center;">3.04</div>
<div class="t" style="left:753px;top:538px;width:64px;height:25px;line-height:25px;color:#222;font-size:12px;text-align:center;">3.21</div>
<div class="t" style="left:818px;top:538px;width:81px;height:25px;line-height:25px;color:#222;font-size:12px;text-align:center;">2.26</div>
<div class="t" style="left:900px;top:538px;width:36px;height:25px;line-height:25px;color:#008000;font-size:12px;text-align:center;"><span class="c">平</span></div>
<div class="t" style="left:937px;top:538px;width:36px;height:25px;line-height:25px;color:#f00;font-size:12px;text-align:center;"><span class="c">赢</span></div>
<div class="t" style="left:974px;top:538px;width:54px;height:25px;line-height:25px;color:#00f;font-size:12px;text-align:center;"><span class="c">小</span></div>
<div class="t" style="left:2px;top:564px;width:80px;height:25px;line-height:25px;color:#fff;font-size:12px;text-align:center;"><span class="c">芬超</span></div>
<div class="t" style="left:83px;top:564px;width:74px;height:25px;line-height:25px;color:#222;font-size:12px;text-align:center;">24-05-12</div>
<div class="t" style="left:158px;top:564px;width:107px;height:25px;line-height:25px;color:#008000;font-size:12px;text-align:center;">EIF<span class="c">埃克纳斯</span></div>
<div class="t" style="left:266px;top:564px;width:87px;height:25px;line-height:25px;color:#222;font-size:12px;text-align:center;"><span style="color:#f00">0-2</span>(0-1)</div>
<div class="t" style="left:354px;top:564px;width:37px;height:25px;line-height:25px;color:#222;font-size:12px;text-align:center;">0-8</div>
<div class="t" style="left:392px;top:564px;width:97px;height:25px;line-height:25px;color:#222;font-size:12px;text-align:center;"><span class="c">埃尔维斯</span></div>
<div class="t" style="left:490px;top:564px;width:53px;height:25px;line-height:25px;color:#222;font-size:12px;text-align:center;">0.90</div>
<div class="t" style="left:544px;top:564px;width:88px;height:25px;line-height:25px;color:#222;font-size:12px;text-align:center;"><span class="c">受一球</span></div>
<div class="t" style="left:633px;top:564px;width:54px;height:25px;line-height:25px;color:#222;font-size:12px;text-align:center;">0.98</div>
<div class="t" style="left:688px;top:564px;width:64px;height:25px;line-height:25px;color:#222;font-size:12px;text-align:center;">5.39</div>
<div class="t" style="left:753px;top:564px;width:64px;height:25px;line-height:25px;color:#222;font-size:12px;text-align:center;">4.08</div>
<div class="t" style="left:818px;top:564px;width:81px;height:25px;line-height:25px;color:#222;font-size:12px;text-align:center;">1.53</div>
<div class="t" style="left:900px;top:564px;width:36px;height:25px;line-height:25px;color:#00f;font-size:12px;text-align:center;"><span class="c">负</span></div>
<div class="t" style="left:937px;top:564px;width:36px;height:25px;line-height:25px;color:#00f;font-size:12px;text-align:center;"><span class="c">输</span></div>
<div class="t" style="left:974px;top:564px;width:54px;height:25px;line-height:25px;color:#00f;font-size:12px;text-align:center;"><span class="c">小</span></div>
<div class="t" style="left:2px;top:590px;width:80px;height:25px;line-height:25px;color:#fff;font-size:12px;text-align:center;"><span class="c">芬兰杯</span></div>
<div class="t" style="left:83px;top:590px;width:74px;height:25px;line-height:25px;color:#222;font-size:12px;text-align:center;">24-05-08</div>
<div class="t" style="left:158px;top:590px;width:107px;height:25px;line-height:25px;color:#222;font-size:12px;text-align:center;"><span class="c">莎埃帕</span></div>
<div class="t" style="left:266px;top:590px;width:87px;height:25px;line-height:25px;color:#222;font-size:12px;text-align:center;"><span style="color:#f00">2-2</span>(0-2)</div>
<div class="t" style="left:354px;top:590px;width:37px;height:25px;line-height:25px;color:#222;font-size:12px;text-align:center;">5-7</div>
<div class="t" style="left:392px;top:590px;width:97px;height:25px;line-height:25px;color:#008000;font-size:12px;text-align:center;">EIF<span class="c">埃克纳斯</span></div>
<div class="t" style="left:490px;top:590px;width:53px;height:25px;line-height:25px;color:#222;font-size:12px;text-align:center;">0.99</div>
<div class="t" style="left:544px;top:590px;width:88px;height:25px;line-height:25px;color:#222;font-size:12px;text-align:center;"><span class="c">受半球</span></div>
<div class="t" style="left:633px;top:590px;width:54px;height:25px;line-height:25px;color:#222;font-size:12px;text-align:center;">0.83</div>
<div class="t" style="left:688px;top:590px;width:64px;height:25px;line-height:25px;color:#222;font-size:12px;text-align:center;">3.85</div>
<div class="t" style="left:753px;top:590px;width:64px;height:25px;line-height:25px;color:#222;font-size:12px;text-align:center;">3.53</div>
<div class="t" style="left:818px;top:590px;width:81px;height:25px;line-height:25px;color:#222;font-size:12px;text-align:center;">1.80</div>
<div class="t" style="left:900px;top:590px;width:36px;height:25px;line-height:25px;color:#008000;font-size:12px;text-align:center;"><span class="c">平</span></div>
<div class="t" style="left:937px;top:590px;width:36px;height:25px;line-height:25px;color:#00f;font-size:12px;text-align:center;"><span class="c">输</span></div>
<div class="t" style="left:974px;top:590px;width:54px;height:25px;line-height:25px;color:#f00;font-size:12px;text-align:center;"><span class="c">大</span></div>
<div class="t" style="left:2px;top:616px;width:80px;height:25px;line-height:25px;color:#fff;font-size:12px;text-align:center;"><span class="c">芬超</span></div>
<div class="t" style="left:83px;top:616px;width:74px;height:25px;line-height:25px;color:#222;font-size:12px;text-align:center;">24-05-04</div>
<div class="t" style="left:158px;top:616px;width:107px;height:25px;line-height:25px;color:#222;font-size:12px;text-align:center;"><span class="c">赫尔辛基</span></div>
<div class="t" style="left:266px;top:616px;width:87px;height:25px;line-height:25px;color:#222;font-size:12px;text-align:center;"><span style="color:#f00">0-0</span>(0-0)</div>
<div class="t" style="left:354px;top:616px;width:37px;height:25px;line-height:25px;color:#222;font-size:12px;text-align:center;">11-3</div>
<div class="t" style="left:392px;top:616px;width:97px;height:25px;line-height:25px;color:#008000;font-size:12px;text-align:center;">EIF<span class="c">埃克纳斯</span></div>
<div class="t" style="left:490px;top:616px;width:53px;height:25px;line-height:25px;color:#222;font-size:12px;text-align:center;">0.92</div>
<div class="t" style="left:544px;top:616px;width:88px;height:25px;line-height:25px;color:#222;font-size:12px;text-align:center;"><span class="c">两球</span></div>
<div class="t" style="left:633px;top:616px;width:54px;height:25px;line-height:25px;color:#222;font-size:12px;text-align:center;">0.96</div>
<div class="t" style="left:688px;top:616px;width:64px;height:25px;line-height:25px;color:#222;font-size:12px;text-align:center;">1.17</div>
<div class="t" style="left:753px;top:616px;width:64px;height:25px;line-height:25px;color:#222;font-size:12px;text-align:center;">6.70</div>
<div class="t" style="left:818px;top:616px;width:81px;height:25px;line-height:25px;color:#222;font-size:12px;text-align:center;">13.07</div>
<div class="t" style="left:900px;top:616px;width:36px;height:25px;line-height:25px;color:#008000;font-size:12px;text-align:center;"><span class="c">平</span></div>
<div class="t" style="left:937px;top:616px;width:36px;height:25px;line-height:25px;color:#f00;font-size:12px;text-align:center;"><span class="c">赢</span></div>
<div class="t" style="left:974px;top:616px;width:54px;height:25px;line-height:25px;color:#00f;font-size:12px;text-align:center;"><span class="c">小</span></div>
<div class="t" style="left:2px;top:642px;width:80px;height:25px;line-height:25px;color:#fff;font-size:12px;text-align:center;"><span class="c">芬超</span></div>
<div class="t" style="left:83px;top:642px;width:74px;height:25px;line-height:25px;color:#222;font-size:12px;text-align:center;">24-04-26</div>
<div class="t" style="left:158px;top:642px;width:107px;height:25px;line-height:25px;color:#222;font-size:12px;text-align:center;"><span class="c">英特土尔库</span></div>
<div class="t" style="left:266px;top:642px;width:87px;height:25px;line-height:25px;color:#222;font-size:12px;text-align:center;"><span style="color:#f00">2-1</span>(1-0)</div>
<div class="t" style="left:354px;top:642px;width:37px;height:25px;line-height:25px;color:#222;font-size:12px;text-align:center;">3-4</div>
<div class="t" style="left:392px;top:642px;width:97px;height:25px;line-height:25px;color:#008000;font-size:12px;text-align:center;">EIF<span class="c">埃克纳斯</span></div>
<div class="t" style="left:490px;top:642px;width:53px;height:25px;line-height:25px;color:#222;font-size:12px;text-align:center;">0.96</div>
<div class="t" style="left:544px;top:642px;width:88px;height:25px;line-height:25px;color:#222;font-size:12px;text-align:center;"><span class="c">一球</span></div>
<div class="t" style="left:633px;top:642px;width:54px;height:25px;line-height:25px;color:#222;font-size:12px;text-align:center;">0.92</div>
<div class="t" style="left:688px;top:642px;width:64px;height:25px;line-height:25px;color:#222;font-size:12px;text-align:center;">1.42</div>
<div class="t" style="left:753px;top:642px;width:64px;height:25px;line-height:25px;color:#222;font-size:12px;text-align:center;">4.39</div>
<div class="t" style="left:818px;top:642px;width:81px;height:25px;line-height:25px;color:#222;font-size:12px;text-align:center;">6.68</div>
<div class="t" style="left:900px;top:642px;width:36px;height:25px;line-height:25px;color:#00f;font-size:12px;text-align:center;"><span class="c">负</span></div>
<div class="t" style="left:937px;top:642px;width:36px;height:25px;line-height:25px;color:#008000;font-size:12px;text-align:center;"><span class="c">走</span></div>
<div class="t" style="left:974px;top:642px;width:54px;height:25px;line-height:25px;color:#f00;font-size:12px;text-align:center;"><span class="c">大</span></div>
<div class="t" style="left:2px;top:668px;width:80px;height:25px;line-height:25px;color:#fff;font-size:12px;text-align:center;"><span class="c">芬超</span></div>
<div class="t" style="left:83px;top:668px;width:74px;height:25px;line-height:25px;color:#222;font-size:12px;text-align:center;">24-04-21</div>
<div class="t" style="left:158px;top:668px;width:107px;height:25px;line-height:25px;color:#008000;font-size:12px;text-align:center;">EIF<span class="c">埃克纳斯</span></div>
<div class="t" style="left:266px;top:668px;width:87px;height:25px;line-height:25px;color:#222;font-size:12px;text-align:center;"><span style="color:#f00">1-1</span>(1-0)</div>
<div class="t" style="left:354px;top:668px;width:37px;height:25px;line-height:25px;color:#222;font-size:12px;text-align:center;">2-10</div>
<div class="t" style="left:392px;top:668px;width:97px;height:25px;line-height:25px;color:#222;font-size:12px;text-align:center;"><span class="c">奥卢</span></div>
<div class="t" style="left:490px;top:668px;width:53px;height:25px;line-height:25px;color:#222;font-size:12px;text-align:center;">0.94</div>
<div class="t" style="left:544px;top:668px;width:88px;height:25px;line-height:25px;color:#222;font-size:12px;text-align:center;"><span class="c">受半球</span></div>
<div class="t" style="left:633px;top:668px;width:54px;height:25px;line-height:25px;color:#222;font-size:12px;text-align:center;">0.95</div>
<div class="t" style="left:688px;top:668px;width:64px;height:25px;line-height:25px;color:#222;font-size:12px;text-align:center;">3.67</div>
<div class="t" style="left:753px;top:668px;width:64px;height:25px;line-height:25px;color:#222;font-size:12px;text-align:center;">3.57</div>
<div class="t" style="left:818px;top:668px;width:81px;height:25px;line-height:25px;color:#222;font-size:12px;text-align:center;">1.88</div>
<div class="t" style="left:900px;top:668px;width:36px;height:25px;line-height:25px;color:#008000;font-size:12px;text-align:center;"><span class="c">平</span></div>
<div class="t" style="left:937px;top:668px;width:36px;height:25px;line-height:25px;color:#f00;font-size:12px;text-align:center;"><span class="c">赢</span></div>
<div class="t" style="left:974px;top:668px;width:54px;height:25px;line-height:25px;color:#00f;font-size:12px;text-align:center;"><span class="c">小</span></div>
<div class="t" style="left:2px;top:694px;width:80px;height:25px;line-height:25px;color:#fff;font-size:12px;text-align:center;"><span class="c">芬兰杯</span></div>
<div class="t" style="left:83px;top:694px;width:74px;height:25px;line-height:25px;color:#222;font-size:12px;text-align:center;">24-04-16</div>
<div class="t" style="left:158px;top:694px;width:107px;height:25px;line-height:25px;color:#222;font-size:12px;text-align:center;"><span class="c">坦佩雷</span><span style="font-family:Liberation Serif,serif;font-size:13px">II</span></div>
<div class="t" style="left:266px;top:694px;width:87px;height:25px;line-height:25px;color:#222;font-size:12px;text-align:center;"><span style="color:#f00">0-11</span>(0-5)</div>
<div class="t" style="left:354px;top:694px;width:37px;height:25px;line-height:25px;color:#222;font-size:12px;text-align:center;">1-9</div>
<div class="t" style="left:392px;top:694px;width:97px;height:25px;line-height:25px;color:#008000;font-size:12px;text-align:center;">EIF<span class="c">埃克纳斯</span></div>
<div class="t" style="left:900px;top:694px;width:36px;height:25px;line-height:25px;color:#f00;font-size:12px;text-align:center;"><span class="c">胜</span></div>
<div class="t" style="left:2px;top:720px;width:1026px;height:25px;line-height:25px;color:#222;font-size:12px;text-align:center;letter-spacing:0.35px;"><span class="c">近</span><span style="color:#f00">10</span><span class="c">场</span>,<span class="c">胜</span>2<span class="c">平</span>4<span class="c">负</span>4, <span class="c">胜率</span>:<span style="color:#f00">20%</span> <span class="c">让胜率</span>:<span style="color:#f00">44.4%</span> <span class="c">大率</span>:<span style="color:#f00">44.4%</span> <span class="c">单率</span>:<span style="color:#f00">50%</span></div>
</body></html>
